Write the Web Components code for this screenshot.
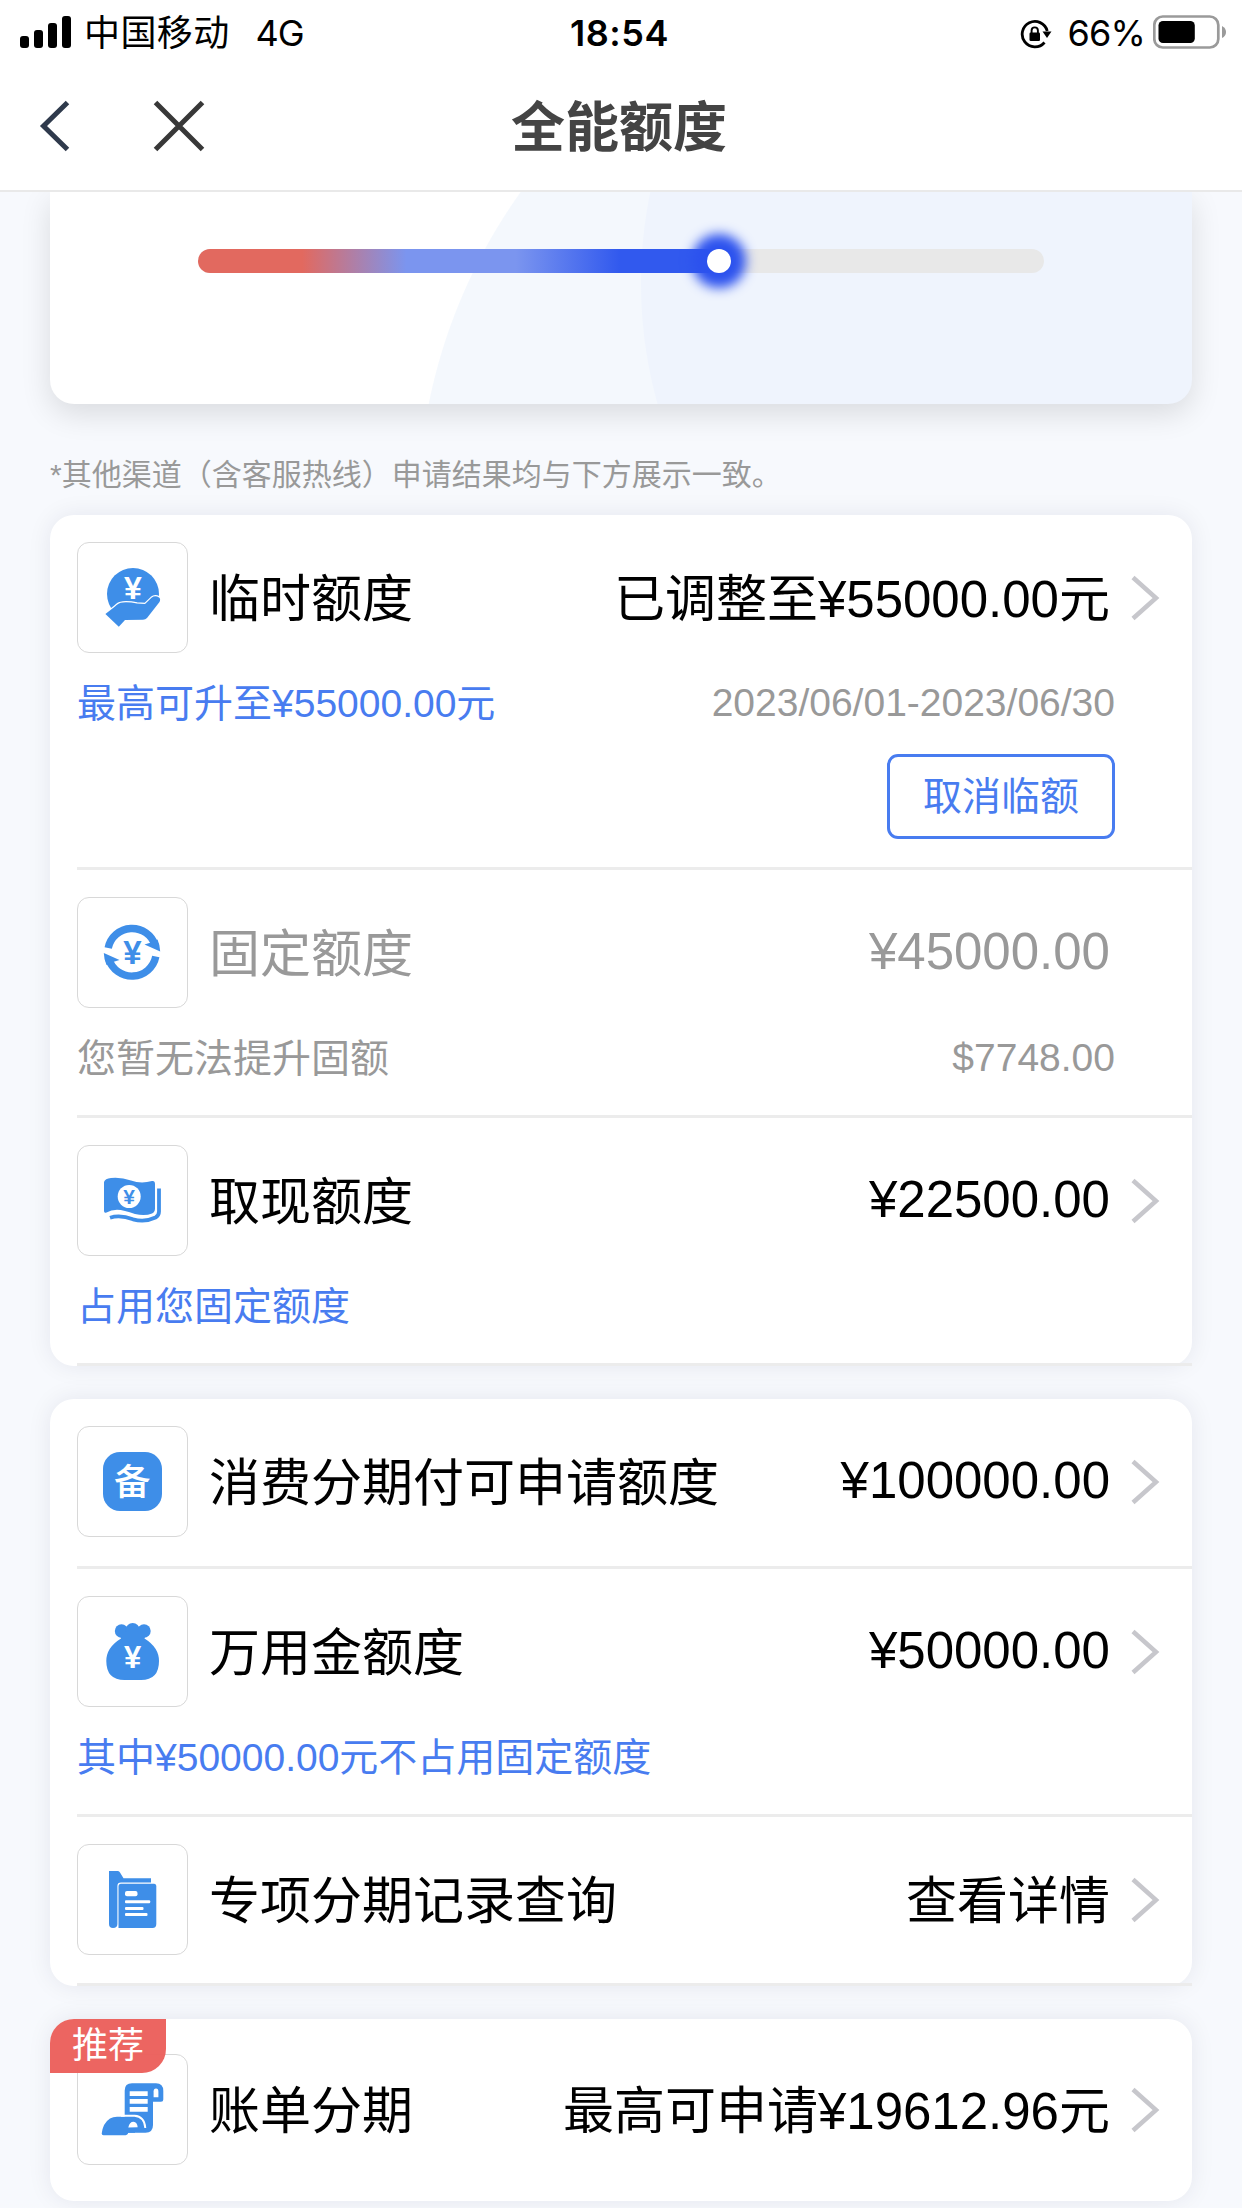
<!DOCTYPE html>
<html lang="zh-CN">
<head>
<meta charset="utf-8">
<title>全能额度</title>
<style>
    html, body { margin: 0; height: 2208px; overflow: hidden; }
    body {
        background: #f7f9fd;
        color: #000;
        font-family: "Liberation Sans", "Noto Sans CJK SC", sans-serif;
        --blue: #487cf0;
        --gray: #999;
        --line: #ececec;
    }
</style>
</head>
<body>
<quota-app>
    <status-bar slot="top" carrier="中国移动" network="4G" time="18:54" battery="66"></status-bar>
    <nav-bar slot="top">全能额度</nav-bar>

    <quota-gauge value="61.6"></quota-gauge>
    <hint-text>*其他渠道（含客服热线）申请结果均与下方展示一致。</hint-text>

    <quota-card>
        <quota-row icon="hand" arrow>
            临时额度
            <span slot="value">已调整至¥55000.00元</span>
            <span slot="note">最高可升至¥55000.00元</span>
            <span slot="extra">2023/06/01-2023/06/30</span>
            <outline-button slot="action">取消临额</outline-button>
        </quota-row>
        <quota-row icon="cycle" disabled>
            固定额度
            <span slot="value" class="num">¥45000.00</span>
            <span slot="note">您暂无法提升固额</span>
            <span slot="extra">$7748.00</span>
        </quota-row>
        <quota-row icon="cash" arrow>
            取现额度
            <span slot="value" class="num">¥22500.00</span>
            <span slot="note">占用您固定额度</span>
        </quota-row>
    </quota-card>

    <quota-card>
        <quota-row icon="bei" arrow>
            消费分期付可申请额度
            <span slot="value" class="num">¥100000.00</span>
        </quota-row>
        <quota-row icon="bag" arrow>
            万用金额度
            <span slot="value" class="num">¥50000.00</span>
            <span slot="note">其中¥50000.00元不占用固定额度</span>
        </quota-row>
        <quota-row icon="folder" arrow style="padding-bottom: 28px">
            专项分期记录查询
            <span slot="value">查看详情</span>
        </quota-row>
    </quota-card>

    <quota-card badge="推荐">
        <quota-row icon="bill" arrow last>
            账单分期
            <span slot="value">最高可申请¥19612.96元</span>
        </quota-row>
    </quota-card>
</quota-app>

<script>
// icons are drawn in the 110x110 space of the icon box
const ICONS = {
    hand: `
        <circle cx="56" cy="52" r="26"/>
        <path d="M28.4 72 38 64.5Q41 60.7 46 60.4 53 60 60 61.5L68 62 74.5 55.8Q78 53 82 55.5 84 57 82.5 60L70 76Q68.5 77.7 66 77.7L48 78 41.8 84.7Z" stroke="#fff" stroke-width="2.4" paint-order="stroke"/>
        <text x="56" y="57" font-size="32" fill="#fff">¥</text>`,
    cycle: `
        <path d="M31.2 51A24.3 24.3 0 0 1 78.2 48.5" fill="none" stroke="#3e8ee8" stroke-width="7.4"/>
        <path d="M67.5 47.6 83.2 54.5Q83 48 80.5 42.5L74 45.5Z"/>
        <g transform="rotate(180 55 55.3)">
            <path d="M31.2 51A24.3 24.3 0 0 1 78.2 48.5" fill="none" stroke="#3e8ee8" stroke-width="7.4"/>
            <path d="M67.5 47.6 83.2 54.5Q83 48 80.5 42.5L74 45.5Z"/>
        </g>
        <text x="55.5" y="67" font-size="33">¥</text>`,
    cash: `
        <path d="M27 37Q28 33.5 34 33 44 32 54 35.5 64 39 75 36 78 35.5 78 39V63.5Q78 67 75 68.5 68 71.3 58 69 47 65 40 64.8 34 65 29.5 67.5 27 68.5 27 66Z"/>
        <path d="M82 43.5V66.5Q82 70.5 78.5 72.5 68 77.5 56 74.3 43 69.5 33 72.8" fill="none" stroke="#3e8ee8" stroke-width="3.8"/>
        <circle cx="52.2" cy="51.5" r="11.5" fill="#fff"/>
        <text x="52.2" y="59" font-size="21">¥</text>`,
    bei: `
        <rect x="26" y="26" width="59" height="59" rx="17"/>
        <text class="cjk" x="55.3" y="69" font-size="36.5" fill="#fff">备</text>`,
    bag: `
        <circle cx="44.5" cy="35" r="6.7"/><circle cx="55.7" cy="34" r="7"/><circle cx="67" cy="35" r="6.7"/>
        <path d="M42 36H69.5L67.5 42.5Q82 51.5 82 65 82 84 64 84H47.5Q29.3 84 29.3 65 29.3 51.5 44 42.5Z"/>
        <text x="55.7" y="71.5" font-size="31" fill="#fff">¥</text>`,
    folder: `
        <path d="M32 27H41Q42.3 27 43 28.5L46.5 34.3H74V38.6H44Q40.4 38.6 40.4 42V80Q40.4 84 36 84 32 84 32 80Z"/>
        <path d="M44 39.8H77Q79.3 39.8 79.3 42.5V80Q79.3 84 75.5 84H41.5V42.5Q41.5 39.8 44 39.8Z"/>
        <g fill="#fff">
            <rect x="48" y="47" width="12.5" height="5.2" rx="2"/>
            <rect x="48" y="56.3" width="25.2" height="3" rx="1"/>
            <rect x="48" y="63" width="18.5" height="3" rx="1"/>
            <rect x="48" y="69" width="22.5" height="3" rx="1"/>
        </g>`,
    bill: `
        <path d="M47.7 64V36.500Q47.7 29.3 55 29.3H79Q86.3 29.3 86.3 37V45.500Q86.3 47.700 84 47.700H76V71Q76 78.700 68.500 78.700H48Z"/>
        <path d="M24.7 79.500Q26 69 33 64.500 36 62.800 40 62.800H58V78.700H51.300Q50.500 81.300 47 81.300H26.500Q24.700 81.300 24.700 79.500Z"/>
        <path d="M76.600 43.300V37.500Q76.600 34.500 79 34.500 81.400 34.500 81.400 37.500V43.300Z" fill="#fff"/>
        <path d="M52.7 37.300H70.700V42H52.7ZM52.7 45H70.700V49.700H52.7ZM52.7 53H70.700V57.700H52.7Z" fill="#fff"/>
        <path d="M44 61.800H57.500Q67.500 62.500 68.300 74" fill="none" stroke="#fff" stroke-width="1.900"/>
        <path d="M51.300 73.500Q52.500 67.700 56.500 67.700 60.200 68 60.700 73.300Z" fill="#fff"/>`,
};

class QuotaApp extends HTMLElement {
    constructor() {
        super();
        this.attachShadow({ mode: 'open' }).innerHTML = `
            <style>
                :host { display: flex; flex-direction: column; height: 2208px; }
                header { background: #fff; border-bottom: 2px solid #e9e9e9; position: relative; z-index: 1; }
                main { display: flex; flex-direction: column; padding: 0 50px; }
            </style>
            <header><slot name="top"></slot></header>
            <main><slot></slot></main>
        `;
    }
}

class StatusBar extends HTMLElement {
    constructor() {
        super();
        const level = Number(this.getAttribute('battery'));
        this.attachShadow({ mode: 'open' }).innerHTML = `
            <style>
                :host {
                    display: grid;
                    grid-template-columns: 1fr auto 1fr;
                    align-items: center;
                    height: 60px;
                    padding: 0 15px 0 20px;
                    font: 36px/60px Inter, "Noto Sans CJK SC", sans-serif;
                    color: #000;
                }
                div { display: flex; align-items: center; height: 60px; }
                span, .time { padding-top: 3px; }
                .carrier { margin-left: 12px; letter-spacing: 0.4px; }
                .network { margin-left: 26px; letter-spacing: -1px; }
                .time { font-weight: 600; letter-spacing: 0.5px; margin-right: 8px; }
                .right { justify-content: flex-end; }
                .percent { margin: 0 8px 0 15px; letter-spacing: -0.8px; }
                svg { display: block; }
            </style>
            <div>
                <svg width="52" height="60">
                    <rect x="0" y="34" width="9" height="12" rx="3"/>
                    <rect x="14" y="28" width="9" height="18" rx="3"/>
                    <rect x="28" y="21" width="9" height="25" rx="3"/>
                    <rect x="42" y="14" width="9" height="32" rx="3"/>
                </svg>
                <span class="carrier">${this.getAttribute('carrier')}</span>
                <span class="network">${this.getAttribute('network')}</span>
            </div>
            <div class="time">${this.getAttribute('time')}</div>
            <div class="right">
                <svg width="32" height="60">
                    <path d="M24.5 40.5A12.7 12.7 0 1 1 27.2 29" fill="none" stroke="#000" stroke-width="2.8"/>
                    <path d="M22.5 29.5H31.5L27 36Z"/>
                    <rect x="9.5" y="30.5" width="10.5" height="8.5" rx="1.3"/>
                    <path d="M11.6 31V28.5A3.1 3.1 0 0 1 17.9 28.5V31" fill="none" stroke="#000" stroke-width="1.9"/>
                </svg>
                <span class="percent">${level}%</span>
                <svg width="74" height="60">
                    <rect x="1.3" y="14.5" width="64" height="31" rx="8.5" fill="none" stroke="#9a9a9a" stroke-width="2.7"/>
                    <rect x="5.5" y="19" width="${55 * level / 100}" height="22" rx="4.5"/>
                    <path d="M69 24Q73 26 73 30 73 34 69 36Z" fill="#9a9a9a"/>
                </svg>
            </div>
        `;
    }
}

class NavBar extends HTMLElement {
    constructor() {
        super();
        this.attachShadow({ mode: 'open' }).innerHTML = `
            <style>
                :host {
                    display: grid;
                    grid-template-columns: 1fr auto 1fr;
                    align-items: center;
                    height: 130px;
                    padding: 0 43px 0 39px;
                    box-sizing: border-box;
                }
                .actions { display: flex; gap: 82px; margin-top: 2px; }
                h1 {
                    margin: 0;
                    padding-bottom: 2px;
                    font: 600 54px/80px "Noto Sans CJK SC", sans-serif;
                    color: #444;
                }
                svg { display: block; fill: none; stroke-width: 5; }
            </style>
            <div class="actions">
                <svg width="32" height="52"><path d="M28.5 2.5 4.5 26 28.5 49.5" stroke="#2f3a4c"/></svg>
                <svg width="52" height="52"><path d="M2.5 2.5 49.5 49.5M49.5 2.5 2.5 49.5" stroke="#383838"/></svg>
            </div>
            <h1><slot></slot></h1>
        `;
    }
}

class QuotaGauge extends HTMLElement {
    constructor() {
        super();
        this.attachShadow({ mode: 'open' }).innerHTML = `
            <style>
                :host {
                    display: block;
                    height: 212px;
                    padding: 57px 148px 0;
                    box-sizing: border-box;
                    border-radius: 0 0 24px 24px;
                    /* two big circles, only their left arcs are visible */
                    background:
                        radial-gradient(circle 450px at 1041px 91px, #eff4fd 449.5px, transparent 450.5px),
                        radial-gradient(circle 550px at 918px 320px, #f4f8fd 549.5px, transparent 550.5px),
                        #fff;
                    box-shadow: 0 10px 30px rgba(0, 0, 0, 0.12);
                }
                .track { height: 24px; border-radius: 12px; background: #e8e8e8; }
                .fill {
                    display: flex;
                    justify-content: flex-end;
                    height: 24px;
                    border-radius: 12px;
                    background: linear-gradient(90deg, #e2695f 20%, #7b95ef 40%, #7b95ef 61%, #3159ee 81%);
                }
                .knob {
                    width: 24px;
                    height: 24px;
                    margin-right: -12px;
                    border-radius: 50%;
                    background: #fff;
                    box-shadow: 0 0 12px 15px #2c52ee;
                }
            </style>
            <div class="track">
                <div class="fill" style="width: ${this.getAttribute('value')}%"><div class="knob"></div></div>
            </div>
        `;
    }
}

class HintText extends HTMLElement {
    constructor() {
        super();
        this.attachShadow({ mode: 'open' }).innerHTML = `
            <style>
                :host { display: block; padding: 51px 0 20px; font-size: 30px; line-height: 40px; color: var(--gray); }
            </style>
            <slot></slot>
        `;
    }
}

class QuotaCard extends HTMLElement {
    constructor() {
        super();
        const badge = this.getAttribute('badge');
        this.attachShadow({ mode: 'open' }).innerHTML = `
            <style>
                :host {
                    display: block;
                    position: relative;
                    margin-bottom: 33px;
                    border-radius: 24px;
                    background: #fff;
                    box-shadow: 0 0 24px rgba(30, 30, 60, 0.08);
                }
                :host([badge]) { padding: 8px 0 9px; }
                .badge {
                    position: absolute;
                    top: 0;
                    left: 0;
                    width: 116px;
                    height: 54px;
                    border-radius: 24px 0 24px 0;
                    background: rgba(235, 95, 91, 0.96);
                    color: #fff;
                    font-size: 36px;
                    line-height: 53px;
                    text-align: center;
                }
            </style>
            <slot></slot>
            ${badge ? `<div class="badge">${badge}</div>` : ''}
        `;
    }
}

class QuotaRow extends HTMLElement {
    constructor() {
        super();
        this.attachShadow({ mode: 'open' }).innerHTML = `
            <style>
                :host {
                    display: block;
                    margin-left: 27px;
                    padding: 27px 0 29px;
                    border-bottom: 3px solid var(--line);
                    color: #000;
                }
                :host([last]) { border-bottom: 0; padding: 27px 0; }
                :host([disabled]) { color: var(--gray); }
                .main, .sub { display: flex; align-items: center; justify-content: space-between; }
                .main { height: 111px; font-size: 51px; line-height: 76px; white-space: nowrap; }
                .icon {
                    width: 109px;
                    height: 109px;
                    border: 1px solid #d8d8d8;
                    border-radius: 12px;
                    margin-right: 21px;
                }
                .icon svg { display: block; margin: -1px; fill: #3e8ee8; }
                .icon text { font: bold 32px "Liberation Sans", sans-serif; text-anchor: middle; }
                .icon text.cjk { font-family: "Noto Sans CJK SC", sans-serif; font-weight: 500; }
                /* latin digits sit lower in their line than the hanzi do */
                .label { flex: 1; padding-top: 5px; }
                ::slotted([slot=value]) { padding-top: 5px; }
                ::slotted([slot=value].num) { padding: 0 0 2px; }
                ::slotted([slot=extra]) { padding-bottom: 2px; }
                .arrow { width: 30px; height: 46px; margin: 0 32px 0 20px; visibility: hidden; }
                :host([arrow]) .arrow { visibility: visible; }
                .sub {
                    height: 54px;
                    margin-top: 24px;
                    padding-right: 77px;
                    font-size: 39px;
                    line-height: 54px;
                    color: var(--gray);
                }
                .note { color: var(--blue); }
                :host([disabled]) .note { color: var(--gray); }
                .action { display: flex; justify-content: flex-end; margin: 23px 0 -1px; padding-right: 77px; }
                [hidden] { display: none; }
            </style>
            <div class="main">
                <div class="icon"><svg width="110" height="110" viewBox="0 0 110 110"></svg></div>
                <div class="label"><slot></slot></div>
                <slot name="value"></slot>
                <svg class="arrow" viewBox="0 0 30 46"><path d="M3 2.5 26 23 3 43.5" fill="none" stroke="#c7c7cc" stroke-width="4.5"/></svg>
            </div>
            <div class="sub">
                <div class="note"><slot name="note"></slot></div>
                <slot name="extra"></slot>
            </div>
            <div class="action"><slot name="action"></slot></div>
        `;
    }

    connectedCallback() {
        const svg = this.shadowRoot.querySelector('.icon svg');
        svg.innerHTML = ICONS[this.getAttribute('icon')];
        // the font shorthand in the styles wins over the attribute, so copy the size
        svg.querySelectorAll('text').forEach((t) => {
            t.style.fontSize = `${t.getAttribute('font-size')}px`;
        });
        this.shadowRoot.querySelector('.sub').hidden = !this.querySelector('[slot=note]');
        this.shadowRoot.querySelector('.action').hidden = !this.querySelector('[slot=action]');
    }
}

class OutlineButton extends HTMLElement {
    constructor() {
        super();
        this.attachShadow({ mode: 'open' }).innerHTML = `
            <style>
                :host { display: block; }
                button {
                    display: block;
                    width: 228px;
                    height: 85px;
                    padding: 0;
                    border: 3px solid var(--blue);
                    border-radius: 11px;
                    background: #fff;
                    color: var(--blue);
                    font: inherit;
                    font-size: 39px;
                    line-height: 78px;
                }
            </style>
            <button><slot></slot></button>
        `;
    }
}

customElements.define('quota-app', QuotaApp);
customElements.define('status-bar', StatusBar);
customElements.define('nav-bar', NavBar);
customElements.define('quota-gauge', QuotaGauge);
customElements.define('hint-text', HintText);
customElements.define('quota-card', QuotaCard);
customElements.define('quota-row', QuotaRow);
customElements.define('outline-button', OutlineButton);
</script>
</body>
</html>
